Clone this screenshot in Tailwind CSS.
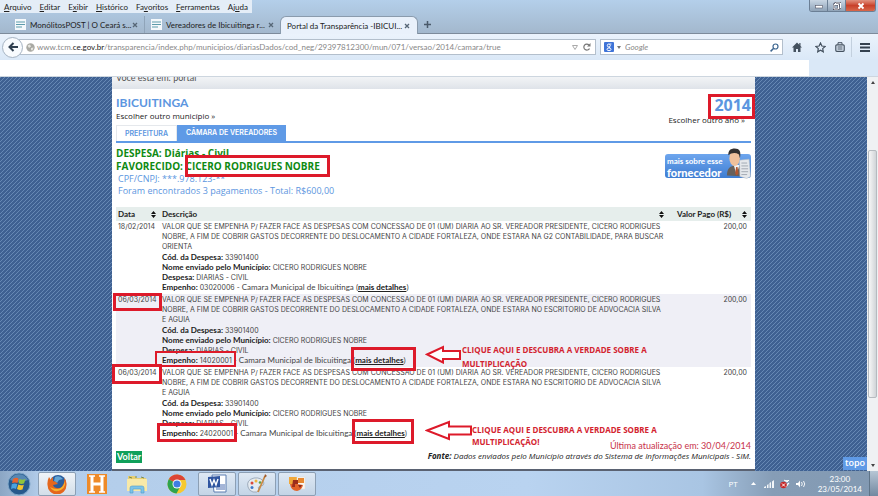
<!DOCTYPE html>
<html lang="pt-BR">

<head>
    <meta charset="UTF-8" />
    <meta name="viewport" content="width=device-width, initial-scale=1.0" />
    <title>Portal da Transparência - IBICUITINGA</title>
    <script src="https://cdn.jsdelivr.net/npm/@tailwindcss/browser@4"></script>
</head>

<body class="h-screen flex flex-col overflow-hidden bg-white text-[8px] leading-[10px] text-[#444] font-['Open_Sans',sans-serif] whitespace-nowrap">

    <!-- Window frame: menu and tabs -->
    <header class="bg-linear-to-b from-[#b4cfea] to-[#a3b8cd] border-b border-[#7d8b9b] text-[#222] font-[Lato,sans-serif]">
        <div class="flex justify-between items-start h-4">
            <nav class="flex gap-2 px-1 h-[13px] items-center bg-[#e4edf7]">
                <a href="#"><u>A</u>rquivo</a>
                <a href="#"><u>E</u>ditar</a>
                <a href="#">E<u>x</u>ibir</a>
                <a href="#"><u>H</u>istórico</a>
                <a href="#">Fa<u>v</u>oritos</a>
                <a href="#"><u>F</u>erramentas</a>
                <a href="#">Aj<u>u</u>da</a>
            </nav>
            <div class="flex mr-[2px] h-3 border border-t-0 border-[#6b7f95] rounded-b-[3px] overflow-hidden">
                <button aria-label="Minimizar" class="w-[18px] bg-linear-to-b from-[#c9d6e4] to-[#8fa3b8] border-r border-[#6b7f95] flex items-center justify-center">
                    <svg class="w-2 h-2" viewBox="0 0 8 8"><rect x="0.500" y="3.500" width="7" height="2.500" fill="#fff" stroke="#556" stroke-width=".6" /></svg>
                </button>
                <button aria-label="Restaurar" class="w-[18px] bg-linear-to-b from-[#c9d6e4] to-[#8fa3b8] border-r border-[#6b7f95] flex items-center justify-center">
                    <svg class="w-2 h-2" viewBox="0 0 8 8" fill="none"><path d="M2.500 2V1h5v5h-1M1 2.500h4.500v4.500H1z" stroke="#445" stroke-width="1.800" /><path d="M2.500 2V1h5v5h-1M1 2.500h4.500v4.500H1z" stroke="#fff" /></svg>
                </button>
                <button aria-label="Fechar" class="w-[29px] bg-linear-to-b from-[#e0917f] via-[#c8412a] to-[#d8674a] flex items-center justify-center">
                    <svg class="w-2 h-2" viewBox="0 0 8 8"><path d="M1.500 1.500l5 5M6.500 1.500l-5 5" stroke="#fff" stroke-width="1.800" /></svg>
                </button>
            </div>
        </div>
        <div class="flex items-end h-[17px]">
            <div class="w-[145px] h-[17px] pl-[15px] pr-[6px] flex items-center border-r border-[#8fa4b9]">
                <svg class="w-[11px] h-[11px] mr-1" viewBox="0 0 11 11"><rect width="11" height="11" fill="#f4f8fb" /><path d="M1 3h9M1 5.500h9M1 8h6" stroke="#5d9bab" stroke-width="1.200" /></svg>
                <span class="flex-1">MonólitosPOST | O Ceará s...</span>
                <svg class="w-[6px] h-[6px]" viewBox="0 0 6 6"><path d="M1 1l4 4M5 1L1 5" stroke="#566676" stroke-width="1.300" /></svg>
            </div>
            <div class="w-[135px] h-[17px] pl-[6px] pr-[6px] flex items-center">
                <svg class="w-[11px] h-[11px] mr-1" viewBox="0 0 11 11"><rect width="11" height="11" fill="#f4f8fb" /><path d="M1 3h9M1 5.500h9M1 8h6" stroke="#5d9bab" stroke-width="1.200" /></svg>
                <span class="flex-1">Vereadores de Ibicuitinga r...</span>
                <svg class="w-[6px] h-[6px]" viewBox="0 0 6 6"><path d="M1 1l4 4M5 1L1 5" stroke="#566676" stroke-width="1.300" /></svg>
            </div>
            <div class="w-[138px] h-[18px] -mb-px pl-[6px] pr-[7px] flex items-center bg-[#e9f1fb] border border-b-0 border-[#8a9bad] rounded-t-[6px] relative">
                <span class="flex-1">Portal da Transparência -IBICUI...</span>
                <svg class="w-[6px] h-[6px]" viewBox="0 0 6 6"><path d="M1 1l4 4M5 1L1 5" stroke="#566676" stroke-width="1.300" /></svg>
            </div>
            <button aria-label="Nova aba" class="h-[17px] px-[6px]">
                <svg class="w-[7px] h-[7px]" viewBox="0 0 7 7"><path d="M3.500 0v7M0 3.500h7" stroke="#4a5a6a" stroke-width="1.500" /></svg>
            </button>
        </div>
    </header>

    <!-- Address bar -->
    <div class="flex items-center h-[26px] pl-[2px] pr-1 bg-linear-to-b from-[#ebf3fc] to-[#dae8f7] text-[#444] font-[Lato,sans-serif]">
        <button aria-label="Voltar" class="w-[21px] h-[21px] shrink-0 rounded-full border border-[#a5b3c2] bg-[#f8fbfe] flex items-center justify-center relative">
            <svg class="w-[10px] h-[10px]" viewBox="0 0 10 10"><path d="M5.500 1L1.500 5l4 4M1.500 5H10" fill="none" stroke="#2f3f50" stroke-width="2" /></svg>
        </button>
        <div class="flex-1 flex items-center h-4 -ml-1 pl-[6px] pr-1 bg-white border border-[#b3bfcc]">
            <svg class="w-[9px] h-[9px] mr-[2px]" viewBox="0 0 9 9"><circle cx="4.500" cy="4.500" r="4.200" fill="#a9a9a3" /><path d="M1.500 2.500l2.500-1 1 2-2 1.500zM5 5l2.500-.500-1 3L5 7z" fill="#e6e6e0" /></svg>
            <div role="textbox" aria-label="Endereço" contenteditable="true" class="flex-1 text-[#888] outline-none">www.tcm.<span class="text-[#222]">ce.gov.br</span>/transparencia/index.php/municipios/diariasDados/cod_neg/29397812300/mun/071/versao/2014/camara/true</div>
            <svg class="w-[6px] h-[5px] mr-[5px]" viewBox="0 0 6 5"><path d="M.500.500h5L3 4.500z" fill="none" stroke="#aaa" /></svg>
            <svg class="w-[8px] h-[8px]" viewBox="0 0 8 8"><path d="M6.500 5.500A3 3 0 1 1 6 2" fill="none" stroke="#777" stroke-width="1.200" /><path d="M7.500 0v3.500H4z" fill="#777" /></svg>
        </div>
        <div class="w-[183px] h-4 ml-1 px-[3px] flex items-center bg-white border border-[#b3bfcc]">
            <svg class="w-[10px] h-[10px] mr-[3px]" viewBox="0 0 10 10"><rect width="10" height="10" rx="1" fill="#3f74d8" /><circle cx="4.800" cy="3.500" r="1.500" fill="none" stroke="#fff" /><ellipse cx="5" cy="7.300" rx="2" ry="1.400" fill="none" stroke="#fff" /><path d="M5.500 2h2M5 5l1 1" stroke="#fff" stroke-width=".8" /></svg>
            <svg class="w-1 h-[3px] mr-1" viewBox="0 0 4 3"><path d="M0 0h4L2 3z" fill="#777" /></svg>
            <input type="text" aria-label="Pesquisar" placeholder="Google" class="flex-1 min-w-0 italic placeholder:text-[#888] outline-none" />
            <svg class="w-[9px] h-[9px]" viewBox="0 0 9 9"><circle cx="5.500" cy="3.500" r="2.500" fill="none" stroke="#3d6690" stroke-width="1.200" /><path d="M3.700 5.300L.600 8.400" stroke="#3d6690" stroke-width="1.500" /></svg>
        </div>
        <div class="flex items-center h-5 ml-[9px]">
            <button aria-label="Página inicial"><svg class="w-[10px] h-[10px]" viewBox="0 0 10 10"><path d="M5 .500L0 5.500h1.500V10H4V7h2v3h2.500V5.500H10L8.500 4V1H7.300v1.800z" fill="#44515f" /></svg></button>
            <button aria-label="Favoritos" class="ml-[13px]"><svg class="w-[11px] h-[11px]" viewBox="0 0 11 11"><path d="M5.500 1l1.400 3 3.200.400-2.400 2.200.600 3.200-2.800-1.600-2.800 1.600.600-3.200L.9 4.400l3.200-.400z" fill="none" stroke="#44515f" stroke-width="1.200" /></svg></button>
            <button aria-label="Lista" class="ml-[9px]"><svg class="w-[10px] h-[10px]" viewBox="0 0 10 10"><rect x=".8" y="2.800" width="8.400" height="6.500" rx="1" fill="none" stroke="#44515f" stroke-width="1.200" /><path d="M3 2.500V.700h4v1.800M2.500 5h5M2.500 7h5" fill="none" stroke="#44515f" /></svg></button>
            <button aria-label="Menu" class="ml-[6px] pl-2 pr-1 h-5 border-l border-[#c3d0de]"><svg class="w-[10px] h-[9px]" viewBox="0 0 10 9"><path d="M0 1h10M0 4.500h10M0 8h10" stroke="#34414f" stroke-width="1.800" /></svg></button>
        </div>
    </div>
    <div class="flex h-[17px] bg-[#dae8f7] border-b border-[#cdd6df]">
        <div class="flex-1 bg-white"></div>
        <div class="w-[69px]"></div>
    </div>

    <!-- Page -->
    <div class="flex-1 min-h-0 flex relative">
        <div class="flex-1 min-w-0 px-28 bg-[linear-gradient(135deg,#6688b4_0_12.5%,#3f6192_12.5%_50%,#6688b4_50%_62.5%,#3f6192_62.5%_100%)] bg-size-[4px_4px] overflow-hidden">
            <main class="h-full bg-white border-b-2 border-[#5a6272] flex flex-col">
                <div class="h-3 shrink-0 px-1 overflow-hidden bg-linear-to-b from-[#f2f4f6] to-[#dfe3e9] text-[9px] leading-[2px] text-[#555] font-[Lato,sans-serif]">Você esta em: portal</div>

                <div class="px-1 flex flex-col flex-1">
                    <div class="flex justify-between pt-[6px]">
                        <div>
                            <h1 class="text-xs leading-4 text-[#5c96e0] font-bold font-[Lato,sans-serif]">IBICUITINGA</h1>
                            <a href="#" class="text-[#222]">Escolher outro município »</a>
                        </div>
                        <div class="text-right">
                            <h2 class="text-base leading-5 text-[#5c96e0] font-bold">2014</h2>
                            <a href="#" class="text-[#222] mr-[6px]">Escolher outro ano »</a>
                        </div>
                    </div>
                    <nav class="flex border-b-2 border-[#5f9ae6] text-[#5c96e0] text-[7px] font-semibold leading-[15px] font-[Inter,sans-serif]">
                        <a href="#" class="w-[61px] text-center border border-b-0 border-[#e5e8ec]">PREFEITURA</a>
                        <a href="#" class="w-[109px] text-center bg-[#5f9ae6] text-white">CÂMARA DE VEREADORES</a>
                    </nav>

                    <div class="flex justify-between h-16 pt-1">
                        <div>
                            <p class="text-[10px] leading-[13px] font-bold text-[#0f8a12]">DESPESA: Diárias - Civil</p>
                            <p class="text-[10px] leading-[13px] font-bold text-[#0f8a12]">FAVORECIDO: CICERO RODRIGUES NOBRE</p>
                            <p class="text-[9px] leading-3 font-medium text-[#5c96e0] px-[2px]">CPF/CNPJ: ***.978.123-**</p>
                            <p class="text-[9px] leading-3 font-medium text-[#5c96e0] px-[2px]">Foram encontrados 3 pagamentos - Total: R$600,00</p>
                        </div>
                        <a href="#" class="w-[86px] h-6 mt-[7px] px-[2px] pt-[2px] relative rounded-[3px] bg-linear-to-b from-[#6ea6ee] to-[#3e7dd2] text-white font-bold leading-[11px] font-[Lato,sans-serif]">
                            mais sobre esse<br><b class="text-[11px] font-black">fornecedor</b>
                            <svg class="absolute right-0 -top-[6px] w-[25px] h-[32px]" viewBox="0 0 26 32">
                                <path d="M1 28c0-6 2-9 6-10l7 0c4 1 6 4 6 11z" fill="#67605b" />
                                <path d="M8 17l3 10 3-10z" fill="#f4f4f4" /><path d="M10.500 19h1.500l1 7-2 2-1.500-2z" fill="#b3552f" />
                                <ellipse cx="9" cy="10" rx="5.500" ry="8" fill="#efc09b" />
                                <path d="M2.500 7C2 2 5 0 9 0c5 0 7 3 5.500 10l-1-4C10 4 6 4 2.500 7z" fill="#33302f" />
                                <path d="M14 12l10-1 1.500 18-4 2-7-2z" fill="#e5e8ec" stroke="#b8bec6" stroke-width=".6" /><path d="M16 15h6M16 18h7M16 21h7M16 24h7M16 27h6" stroke="#9098a2" stroke-width=".8" />
                            </svg>
                        </a>
                    </div>

                    <table class="w-full table-fixed font-[Lato,sans-serif]">
                        <thead class="bg-[#e6eeec] text-[#222] text-left">
                            <tr class="h-[14px]">
                                <th class="w-[46px] pl-[2px] font-bold"><div class="flex justify-between items-center pr-[6px]">Data <svg class="w-[5px] h-[7px]" viewBox="0 0 5 7"><path d="M0 3h5L2.500 0zM0 4h5L2.500 7z" fill="#111" /></svg></div></th>
                                <th class="font-bold"><div class="flex justify-between items-center pr-[3px]">Descrição <svg class="w-[5px] h-[7px]" viewBox="0 0 5 7"><path d="M0 3h5L2.500 0zM0 4h5L2.500 7z" fill="#111" /></svg></div></th>
                                <th class="w-[84px] font-bold"><div class="flex justify-between items-center pl-[10px] pr-1">Valor Pago (R$) <svg class="w-[5px] h-[7px]" viewBox="0 0 5 7"><path d="M0 3h5L2.500 0zM0 4h5L2.500 7z" fill="#111" /></svg></div></th>
                            </tr>
                        </thead>
                        <tbody class="align-top text-[7px] font-[Inter,sans-serif]">
                            <tr>
                                <td class="pt-px pb-[2px] pl-[2px]">18/02/2014</td>
                                <td class="pt-px pb-[2px]">
                                    <p>VALOR QUE SE EMPENHA P/ FAZER FACE AS DESPESAS COM CONCESSAO DE 01 (UM) DIARIA AO SR. VEREADOR PRESIDENTE, CICERO RODRIGUES<br>
                                        NOBRE, A FIM DE COBRIR GASTOS DECORRENTE DO DESLOCAMENTO A CIDADE FORTALEZA, ONDE ESTARA NA G2 CONTABILIDADE, PARA BUSCAR<br>
                                        ORIENTA</p>
                                    <p class="h-[10px]"><b class="text-[8px] text-[#222] font-[Lato,sans-serif]">Cód. da Despesa:</b> 33901400</p>
                                    <p class="h-[10px]"><b class="text-[8px] text-[#222] font-[Lato,sans-serif]">Nome enviado pelo Município:</b> CICERO RODRIGUES NOBRE</p>
                                    <p class="h-[10px]"><b class="text-[8px] text-[#222] font-[Lato,sans-serif]">Despesa:</b> DIARIAS - CIVIL</p>
                                    <p class="h-[10px]"><b class="text-[8px] text-[#222] font-[Lato,sans-serif]">Empenho:</b> 03020006 <span class="text-[8px] font-[Lato,sans-serif]">- Camara Municipal de Ibicuitinga (<a href="#" class="font-bold underline text-[#222]">mais detalhes</a>)</span></p>
                                </td>
                                <td class="pt-px pb-[2px] pr-1 text-right">200,00</td>
                            </tr>
                            <tr class="bg-[#efeff6]">
                                <td class="pt-px pb-[2px] pl-[2px]">06/03/2014</td>
                                <td class="pt-px pb-[2px]">
                                    <p>VALOR QUE SE EMPENHA P/ FAZER FACE AS DESPESAS COM CONCESSAO DE 01 (UM) DIARIA AO SR. VEREADOR PRESIDENTE, CICERO RODRIGUES<br>
                                        NOBRE, A FIM DE COBRIR GASTOS DECORRENTE DO DESLOCAMENTO A CIDADE FORTALEZA, ONDE ESTARA NO ESCRITORIO DE ADVOCACIA SILVA<br>
                                        E AGUIA</p>
                                    <p class="h-[10px]"><b class="text-[8px] text-[#222] font-[Lato,sans-serif]">Cód. da Despesa:</b> 33901400</p>
                                    <p class="h-[10px]"><b class="text-[8px] text-[#222] font-[Lato,sans-serif]">Nome enviado pelo Município:</b> CICERO RODRIGUES NOBRE</p>
                                    <p class="h-[10px]"><b class="text-[8px] text-[#222] font-[Lato,sans-serif]">Despesa:</b> DIARIAS - CIVIL</p>
                                    <p class="h-[10px]"><b class="text-[8px] text-[#222] font-[Lato,sans-serif]">Empenho:</b> 14020001 <span class="text-[8px] font-[Lato,sans-serif]">- Camara Municipal de Ibicuitinga (<a href="#" class="font-bold underline text-[#222]">mais detalhes</a>)</span></p>
                                </td>
                                <td class="pt-px pb-[2px] pr-1 text-right">200,00</td>
                            </tr>
                            <tr>
                                <td class="pt-px pb-[2px] pl-[2px]">06/03/2014</td>
                                <td class="pt-px pb-[2px]">
                                    <p>VALOR QUE SE EMPENHA P/ FAZER FACE AS DESPESAS COM CONCESSAO DE 01 (UM) DIARIA AO SR. VEREADOR PRESIDENTE, CICERO RODRIGUES<br>
                                        NOBRE, A FIM DE COBRIR GASTOS DECORRENTE DO DESLOCAMENTO A CIDADE FORTALEZA, ONDE ESTARA NO ESCRITORIO DE ADVOCACIA SILVA<br>
                                        E AGUIA</p>
                                    <p class="h-[10px]"><b class="text-[8px] text-[#222] font-[Lato,sans-serif]">Cód. da Despesa:</b> 33901400</p>
                                    <p class="h-[10px]"><b class="text-[8px] text-[#222] font-[Lato,sans-serif]">Nome enviado pelo Município:</b> CICERO RODRIGUES NOBRE</p>
                                    <p class="h-[10px]"><b class="text-[8px] text-[#222] font-[Lato,sans-serif]">Despesa:</b> DIARIAS - CIVIL</p>
                                    <p class="h-[10px]"><b class="text-[8px] text-[#222] font-[Lato,sans-serif]">Empenho:</b> 24020001 <span class="text-[8px] font-[Lato,sans-serif]">- Camara Municipal de Ibicuitinga (<a href="#" class="font-bold underline text-[#222]">mais detalhes</a>)</span></p>
                                </td>
                                <td class="pt-px pb-[2px] pr-1 text-right">200,00</td>
                            </tr>
                        </tbody>
                    </table>

                    <div class="flex justify-between items-end mt-auto pb-[6px]">
                        <button class="h-3 px-px bg-[#0fa05a] text-white text-[9px] leading-3 font-bold font-[Lato,sans-serif]">Voltar</button>
                        <div class="text-right pb-[2px]">
                            <p class="text-[9px] text-[#c8324a] font-[Lato,sans-serif]">Última atualização em: 30/04/2014</p>
                            <p class="italic text-[#222]"><b>Fonte:</b> Dados enviados pelo Município através do Sistema de Informações Municipais - SIM.</p>
                        </div>
                    </div>
                </div>
            </main>
        </div>

        <!-- Scrollbar -->
        <div class="w-[11px] bg-[#eff1f3] flex flex-col items-center justify-between py-1 relative">
            <svg class="w-1 h-[3px]" viewBox="0 0 4 3"><path d="M0 3h4L2 0z" fill="#444" /></svg>
            <div class="absolute inset-x-px top-[73px] h-[248px] border border-[#b5babf] rounded-[2px] bg-linear-to-r from-[#f6f6f6] to-[#d0d4d8]"></div>
            <svg class="w-1 h-[3px]" viewBox="0 0 4 3"><path d="M0 0h4L2 3z" fill="#444" /></svg>
        </div>
        <a href="#" class="absolute right-[11px] bottom-px w-6 h-[13px] bg-[#5f9ae6] text-white text-[9px] leading-3 text-center font-semibold">topo</a>

        <!-- Red annotations over the page -->
        <div class="absolute left-[708px] top-[17px] w-[47px] h-[25px] border-3 border-[#dd1a2a]"></div>
        <div class="absolute left-[185px] top-[78px] w-[145px] h-[22px] border-3 border-[#dd1a2a]"></div>
        <div class="absolute left-[113px] top-[216px] w-[49px] h-[18px] border-3 border-[#dd1a2a]"></div>
        <div class="absolute left-[155px] top-[274px] w-[81px] h-[16px] border-2 border-[#dd1a2a]"></div>
        <div class="absolute left-[112px] top-[287px] w-[50px] h-[20px] border-3 border-[#dd1a2a]"></div>
        <div class="absolute left-[351px] top-[270px] w-[65px] h-[24px] border-3 border-[#dd1a2a]"></div>
        <div class="absolute left-[157px] top-[346px] w-[80px] h-[19px] border-3 border-[#dd1a2a]"></div>
        <div class="absolute left-[352px] top-[342px] w-[62px] h-[25px] border-3 border-[#dd1a2a]"></div>
        <svg class="absolute left-[425px] top-[268px] w-[38px] h-[19px]" viewBox="0 0 38 19"><path d="M2 9.500L18 2v4h17v8H18v3.500z" fill="#fff" stroke="#dd1a2a" stroke-width="2" /></svg>
        <svg class="absolute left-[425px] top-[343px] w-[48px] h-[21px]" viewBox="0 0 48 21"><path d="M2 10.500L24 2v4.500h22v8H24v4.500z" fill="#fff" stroke="#dd1a2a" stroke-width="2" /></svg>
        <p class="absolute left-[462px] top-[266px] leading-[14px] font-bold text-[#d3232f]">CLIQUE AQUI E DESCUBRA A VERDADE SOBRE A<br>MULTIPLICAÇÃO</p>
        <p class="absolute left-[472px] top-[347px] leading-3 font-bold text-[#d3232f]">CLIQUE AQUI E DESCUBRA A VERDADE SOBRE A<br>MULTIPLICAÇÃO!</p>
    </div>

    <!-- Taskbar -->
    <footer class="h-[25px] flex items-center bg-[linear-gradient(90deg,#8ba6c4_0,#b3cdea_40px,#b9d3f0_60%,#a9c5e3_80%,#869db6_88%,#8299b2_100%)] text-white">
        <button aria-label="Iniciar" class="w-[38px] flex justify-center">
            <svg class="w-[24px] h-[24px]" viewBox="0 0 24 24"><circle cx="12" cy="12" r="11" fill="#27598c" stroke="#7da6c8" /><path d="M3 8a10 10 0 0 1 18 0q-9 4-18 0z" fill="#78a9cd" opacity=".6" /><path d="M6 7q3-2 5.500-.500L10.500 11Q8 10 5 11z" fill="#e8642e" /><path d="M12.500 7q3 1.500 6 0l-1.500 4.500q-3 1-5.500-.300z" fill="#8fc43c" /><path d="M4.800 12.200q3-1.200 5.500 0L9 17q-2.500-1.500-5 0z" fill="#4aa3e0" /><path d="M11.300 12.500q2.500 1.500 5.500.300L15.500 17.500q-3 1-5.500-.500z" fill="#f6c52e" /></svg>
        </button>
        <button aria-label="Firefox" class="w-[38px] h-6 flex items-center justify-center border border-[#8c9fb4] rounded-[2px] bg-linear-to-b from-[#f0f4f8] to-[#d3dee9]">
            <svg class="w-5 h-5" viewBox="0 0 20 20"><circle cx="11" cy="9" r="8" fill="#2b5d9c" /><path d="M8 3q5-2 8 2l-4 1-2 3-3-2z" fill="#62a5d4" /><path d="M2 3Q0 7 .500 11A9.500 9.500 0 0 0 19.500 11Q20 6 17 4q1 4-1 7-2 4-6 3-3 0-4-3l5-1Q9 7 6 7L6 3Q4 4 4 6z" fill="#e4671d" /><path d="M18 7q1 8-7 10-5 1-8-4 3 2 7 2 6 0 8-8z" fill="#f5b32f" /></svg>
        </button>
        <button aria-label="H" class="w-[41px] flex justify-center">
            <svg class="w-5 h-5" viewBox="0 0 20 20"><rect width="20" height="20" fill="#ee8a28" /><path d="M2 2h6M12 2h6M2 18h6M12 18h6" stroke="#fff" stroke-width="1.500" /><path d="M5 2v16M15 2v16M5 10h10" stroke="#fff" stroke-width="3" /></svg>
        </button>
        <button aria-label="Explorer" class="w-10 flex justify-center">
            <svg class="w-5 h-5" viewBox="0 0 20 20"><path d="M1 2h7l1 2h10v13H1z" fill="#e8cf72" /><path d="M0 5h20v12H0z" fill="#f8e9a8" /><path d="M2 3l3 1M8 3h2M14 3l3 1" stroke="#7a8a4a" /><path d="M3 19v-5q0-2 2-2h10q2 0 2 2v5h-3v-4H6v4z" fill="#7cc3e8" stroke="#4f9ccb" stroke-width=".6" /></svg>
        </button>
        <button aria-label="Chrome" class="w-10 flex justify-center">
            <svg class="w-5 h-5" viewBox="0 0 20 20"><circle cx="10" cy="10" r="9.500" fill="#f6c92f" /><path d="M10 10L1.800 5.200A9.500 9.500 0 0 1 18.500 6H10z" fill="#db4437" /><path d="M10 10L1.800 5.200A9.500 9.500 0 0 0 9.500 19.500L13.500 12z" fill="#2da34e" /><circle cx="10" cy="10" r="4.500" fill="#fff" /><circle cx="10" cy="10" r="3.600" fill="#3f7de0" /></svg>
        </button>
        <div class="flex gap-[2px] ml-px">
            <button aria-label="Word" class="w-[38px] h-6 flex items-center justify-center border border-[#8c9fb4] rounded-[2px] bg-linear-to-b from-[#dfe9f4] to-[#c3d4e6]">
                <svg class="w-5 h-5" viewBox="0 0 20 20"><path d="M5 1h14v17H7z" fill="#fff" stroke="#5b7cb0" /><path d="M9 11h9M9 13h9M9 15h9" stroke="#4a6db0" /><path d="M1 3l12-1v11L1 14z" fill="#2f55a0" /><path d="M3 5l2 6 2-5 2 5 2-6" fill="none" stroke="#fff" stroke-width="1.400" /></svg>
            </button>
            <button aria-label="Paint" class="w-[38px] h-6 flex items-center justify-center border border-[#8c9fb4] rounded-[2px] bg-linear-to-b from-[#dfe9f4] to-[#c3d4e6]">
                <svg class="w-5 h-5" viewBox="0 0 20 20"><path d="M1 13Q-1 6 7 4q8-1 10 5 0 3-4 3-3 1-1 4-2 3-6 2-4-1-5-5z" fill="#e4eaf0" stroke="#8e9dae" stroke-width=".8" /><circle cx="5" cy="9" r="1.500" fill="#d9483b" /><circle cx="9" cy="7" r="1.500" fill="#efb33c" /><circle cx="13" cy="8.500" r="1.300" fill="#5aa34a" /><circle cx="5" cy="13.500" r="1.500" fill="#3f79c8" /><path d="M18 2L11 18" stroke="#c98a45" stroke-width="1.800" /><path d="M17 4l1-4 2 2z" fill="#a05a2c" /></svg>
            </button>
            <button aria-label="Imagens" class="w-[38px] h-6 flex items-center justify-center border border-[#8c9fb4] rounded-[2px] bg-linear-to-b from-[#dfe9f4] to-[#c3d4e6]">
                <svg class="w-5 h-5" viewBox="0 0 20 20"><path d="M2 3h9v7H2z" fill="#f1a83a" /><path d="M10 3h8v12h-8z" fill="#f9f5ee" stroke="#e3d9cc" stroke-width=".5" /><path d="M11 4h6v5h-6z" fill="#e8882f" /><path d="M3 10q1 7 7 7 5-1 6-6l-6-1z" fill="#e2622a" /><path d="M6 6h5v4H8v3H5z" fill="#9c2d1c" /><path d="M11 11h4l-2 3z" fill="#8a2a1c" /></svg>
            </button>
        </div>
        <div class="ml-auto flex items-center">
            <span class="mr-[9px]">PT</span>
            <svg class="w-[5px] h-[3px] mr-2 ml-1" viewBox="0 0 5 3"><path d="M0 3h5L2.500 0z" fill="#fff" /></svg>
            <svg class="w-[10px] h-[8px] mr-[6px]" viewBox="0 0 10 8"><path d="M0 8V7l2-1v2zM3 8V5l1.500-1v4zM5.500 8V3L7 2v6zM8 8V1.500L10 0v8z" fill="#f2f5f8" /></svg>
            <svg class="w-[10px] h-[10px] mr-[6px]" viewBox="0 0 10 10"><path d="M4 1l3 2 2-2M9 4L6 8H3z" fill="#eee" stroke="#fff" /><circle cx="3.500" cy="6" r="3.300" fill="#c62828" /><path d="M2 4.500l3 3M5 4.500l-3 3" stroke="#fff" /></svg>
            <svg class="w-[10px] h-[8px] mr-3" viewBox="0 0 10 8"><path d="M0 3h2l2-2.500v7L2 5H0z" fill="#fff" /><path d="M5.500 2q1.500 2 0 4M7.500 1q2.500 3 0 6" fill="none" stroke="#fff" stroke-width=".9" /></svg>
            <div class="text-center mr-[7px] font-[Lato,sans-serif]">23:00<br>23/05/2014</div>
            <div class="w-[9px] h-[25px] border-l border-[#5f7488] bg-linear-to-b from-[#b7c6d5] to-[#7388a0]"></div>
        </div>
    </footer>

</body>

</html>
